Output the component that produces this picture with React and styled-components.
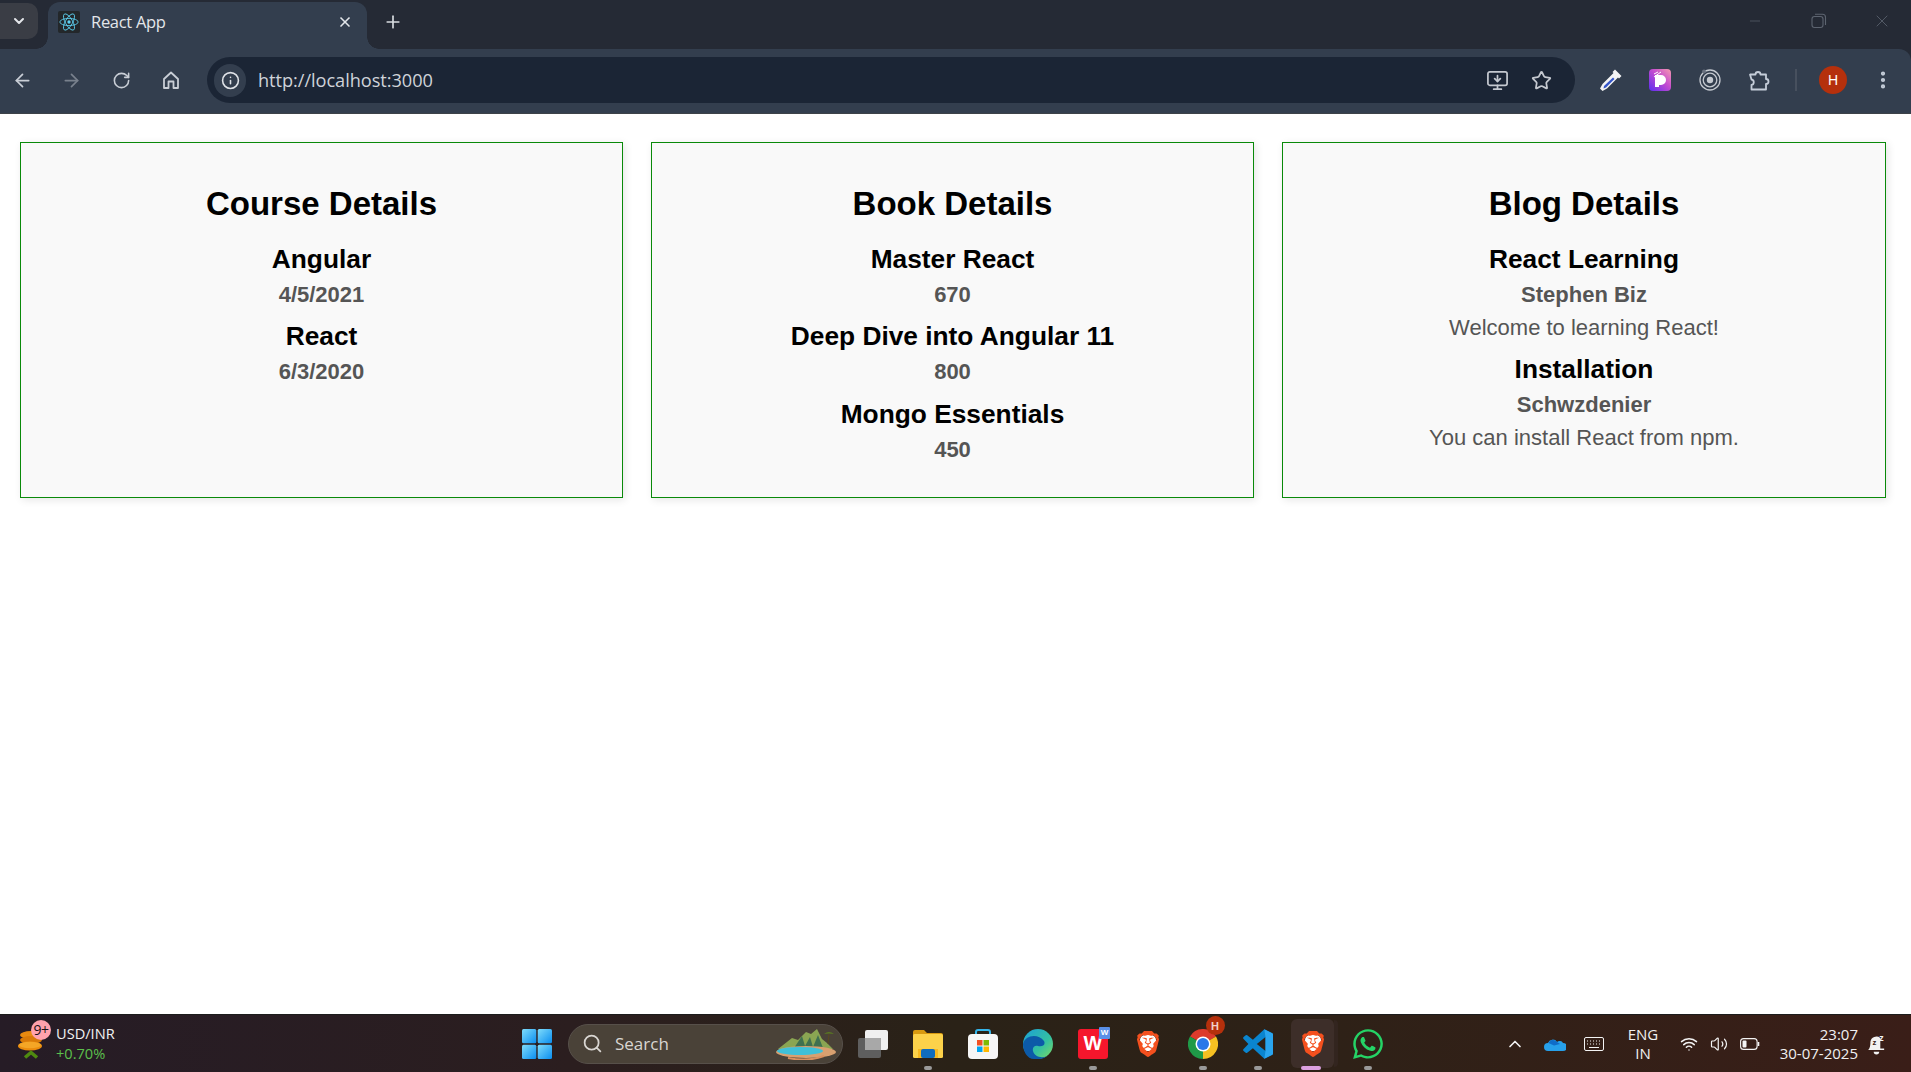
import React from "react";
import styled, { createGlobalStyle } from "styled-components";
import { ArrowLeft, ArrowRight, RotateCw, Info, Star, X, Plus, ChevronDown, ChevronUp, Search as SearchGlyph, EllipsisVertical, Minus, Wifi, Volume2, MonitorDown } from "lucide-react";
import { FaWhatsapp } from "react-icons/fa";
import { SiBrave } from "react-icons/si";

const Global = createGlobalStyle`
  html, body { margin: 0; padding: 0; background: #fff; }
  * { box-sizing: border-box; }
`;
const Page = styled.div`
  height: 1072px; width: 1911px; display: flex; flex-direction: column; overflow: hidden;
  font-family: "Liberation Sans", Arial, sans-serif;
`;
const Header = styled.header`
  flex: none; background: #252a35;
`;
const Strip = styled.div`
  height: 49px; display: flex; align-items: flex-start;
`;
const TabSearch = styled.div`
  width: 38px; height: 36px; margin: 3px 0 0 0; border-radius: 0 10px 10px 0; background: #3a3d45; color: #e4e6ea;
  display: flex; align-items: center; justify-content: center;
`;
const Tab = styled.div`
  position: relative; width: 319px; height: 47px; margin: 2px 0 0 10px; background: #333e4e; border-radius: 12px 12px 0 0;
  display: flex; align-items: center; padding: 0 14px 8px 10px; color: #e3e6ea; font: 16.5px "Open Sans", sans-serif;
  &::before, &::after { content: ""; position: absolute; bottom: 0; width: 12px; height: 12px; }
  &::before { left: -12px; background: radial-gradient(circle at 0 0, transparent 11.5px, #333e4e 12px); }
  &::after { right: -12px; background: radial-gradient(circle at 100% 0, transparent 11.5px, #333e4e 12px); }
`;
const Favicon = styled.div`
  width: 22px; height: 22px; background: #23272a; border-radius: 2px; display: flex; align-items: center; justify-content: center; flex: none; margin-right: 11px;
`;
const TabTitle = styled.span`
  flex: 1; letter-spacing: -0.3px;
`;
const NewTab = styled.div`
  margin: 12px 0 0 16px; color: #d8dbe0; display: flex;
`;
const WindowControls = styled.div`
  margin-left: auto; margin-right: -3px; display: flex; color: #5d6470; padding: 9px 0 0 0;
`;
const WinButton = styled.div`
  width: 63.5px; height: 24px; display: flex; align-items: center; justify-content: center;
`;
const Toolbar = styled.div`
  height: 65px; background: #333e4e; border-bottom: 1px solid #3d4248; border-radius: 0 12px 0 0;
  display: flex; align-items: flex-start; padding: 8px 0 0 0;
`;
const NavGroup = styled.div`
  width: 207px; height: 46px; display: flex; align-items: center; flex: none;
`;
const NavButton = styled.div`
  width: 49.3px; margin-left: ${p => p.$first ? "-2px" : "0"}; display: flex; justify-content: center; color: ${p => p.$dim ? "#79818d" : "#c9ced6"};
`;
const Omnibox = styled.div`
  width: 1368px; height: 46px; border-radius: 23px; background: #1b2535; display: flex; align-items: center; padding: 0 23px 0 7px; flex: none;
`;
const InfoPill = styled.div`
  width: 32px; height: 33px; border-radius: 17px; background: #333e4e; color: #dfe2e7; display: flex; align-items: center; justify-content: center; flex: none;
`;
const Url = styled.span`
  margin-left: 12px; font: 18.2px "Open Sans", sans-serif; color: #cfd3d9; letter-spacing: -0.05px;
  flex: 1;
`;
const OmniIcons = styled.div`
  display: flex; gap: 22px; color: #c5c9d0; align-items: center;
`;
const Extensions = styled.div`
  display: flex; align-items: center; height: 46px; padding-left: 11px; color: #c5cdd9;
`;
const Ext = styled.div`
  width: 49.5px; display: flex; justify-content: center; align-items: center;
`;
const Divider = styled.div`
  width: 2px; height: 22px; background: #47505e; margin: 0 22px 0 11px;
`;
const Avatar = styled.div`
  width: 28px; height: 28px; border-radius: 50%; background: #b5300c; color: #fff; font: 14px "Liberation Sans", sans-serif;
  display: flex; align-items: center; justify-content: center; margin-right: 24.5px;
`;
const Kebab = styled.div`
  display: flex; color: #c5cdd9;
`;
const Content = styled.main`
  flex: 1; background: #fff; padding: 28px 0 0 20px; display: grid; grid-template-columns: 603px 603px 604px; column-gap: 28px; align-content: start;
`;
const Card = styled.section`
  height: 356px; border: 1px solid #0a8a0a; background: #f9f9f9; box-shadow: 2px 2px 8px rgba(0,0,0,.1);
  padding: 42px 20px 0; text-align: center; display: flex; flex-direction: column; align-items: center;
`;
const CardTitle = styled.h2`
  margin: 0 0 23px; font-size: 33px; line-height: 37px; font-weight: 700; color: #000;
`;
const Item = styled.div`
  margin-bottom: 15.4px; display: flex; flex-direction: column; align-items: center;
`;
const ItemName = styled.h3`
  margin: 0; font-size: 26.3px; line-height: 28px; font-weight: 700; color: #000;
`;
const ItemMeta = styled.h4`
  margin: 10px 0 0; font-size: 22px; line-height: 24px; font-weight: 700; color: #555;
`;
const ItemBody = styled.p`
  margin: 9px 0 0; font-size: 22px; line-height: 24px; font-weight: 400; color: #555;
`;
const Taskbar = styled.footer`
  height: 58px; flex: none; display: flex; align-items: center;
  background: linear-gradient(90deg, #261c26 0%, #2b1e1f 30%, #2a2217 50%, #2e2117 70%, #3a1e18 100%);
  border-top: 1px solid #1c1c1c;
`;
const Widget = styled.div`
  width: 509px; flex: none; display: flex; align-items: center; padding-left: 18px;
`;
const CoinWrap = styled.div`
  width: 38px; height: 36px; position: relative; flex: none;
`;
const Badge = styled.div`
  position: absolute; left: 13px; top: -6px; width: 20px; height: 20px; border-radius: 50%; background: #ffa2ad; color: #1b1216;
  font: 14px "Open Sans", sans-serif; display: flex; align-items: center; justify-content: center; letter-spacing: -0.5px;
`;
const WidgetText = styled.div`
  font: 14.6px/20px "Open Sans", sans-serif; color: #f2f2f2; margin-top: -2px;
`;
const Gain = styled.div`
  color: #5cc04c;
`;
const StartSlot = styled.div`
  width: 55px; display: flex; justify-content: center; flex: none;
`;
const SearchPill = styled.div`
  width: 275px; height: 40px; margin: 0 2.5px 0 4px; border-radius: 20px; background: #4a4238; border: 1px solid #57504a;
  display: flex; align-items: center; padding-left: 13px; color: #d9d6d2; font: 17px "Open Sans", sans-serif; position: relative; flex: none;
`;
const SearchText = styled.span`
  margin-left: 12px; flex: 1;
`;
const SearchArt = styled.svg`
  position: absolute; right: 0; top: 3px;
`;
const AppSlot = styled.div`
  width: 55px; height: 49px; flex: none; display: flex; justify-content: center; align-items: center; position: relative;
  & > svg, & > div { position: relative; }
  ${p => p.$active && `
    &::before { content: ""; position: absolute; left: 5px; top: 0; width: 43px; height: 49px; border-radius: 6px; background: #3d2e29; }
    &::after { content: ""; position: absolute; left: 48px; top: 1px; width: 4px; height: 47px; border-radius: 0 6px 6px 0; background: #33251f; }
  `}
`;
const Dot = styled.span`
  position: absolute; bottom: -2px; left: ${p => p.$active ? "47%" : "50%"}; transform: translateX(-50%); height: 4px; border-radius: 2px; z-index: 1;
  width: ${p => p.$active ? "20px" : "8px"}; background: ${p => p.$active ? "#dca0e0" : "#9a9a9a"};
`;
const ChromeBadge = styled.div`
  position: absolute !important; left: 30px; top: -3px; width: 19px; height: 19px; border-radius: 50%; background: #b5300c; color: #f2d0c8;
  font: 700 11px "Liberation Sans", sans-serif; display: flex; align-items: center; justify-content: center;
`;
const Tray = styled.div`
  margin-left: auto; padding-right: 15px; display: flex; align-items: center; color: #f4f4f4;
`;
const TrayIcon = styled.div`
  width: ${p => p.$w}px; display: flex; justify-content: center; align-items: center;
`;
const Lang = styled.div`
  width: 64px; text-align: center; font: 15px/19px "Open Sans", sans-serif; color: #f0f0f0;
`;
const Clock = styled.div`
  text-align: right; font: 15px/19px "Open Sans", sans-serif; color: #f0f0f0; width: 93px; white-space: nowrap;
`;
const WpsTile = styled.div`
  width: 30px; height: 30px; background: #f5162c; border-radius: 3px; position: relative; display: flex; align-items: center; justify-content: center;
`;
const WpsMark = styled.span`
  color: #fff; font: 700 20px "Liberation Sans", sans-serif;
`;
const WpsCorner = styled.span`
  position: absolute; right: -2px; top: -2px; width: 11px; height: 12px; background: #5a90e8; color: #fff; border-radius: 1px;
  font: 700 8px "Liberation Sans", sans-serif; display: flex; align-items: center; justify-content: center;
`;
const BraveWrap = styled.div`
  width: 26px; height: 30px; position: relative; display: flex; align-items: center; justify-content: center; color: #f4501e;
  svg { position: relative; }
  &::before { content: ""; position: absolute; left: 5px; top: 6px; width: 16px; height: 16px; background: #fff; border-radius: 5px; }
`;

const ReactLogo = () => (
  <svg width="20" height="20" viewBox="-12 -12 24 24" fill="none" stroke="#5ed3f3" strokeWidth="1">
    <circle r="2" fill="#5ed3f3" stroke="none" />
    <ellipse rx="11" ry="4.3" />
    <ellipse rx="11" ry="4.3" transform="rotate(60)" />
    <ellipse rx="11" ry="4.3" transform="rotate(120)" />
  </svg>
);
const HomeIcon = () => (
  <svg width="20" height="20" viewBox="0 0 20 20" fill="none" stroke="currentColor" strokeWidth="1.8" strokeLinejoin="round">
    <path d="M3 9 10 2.500 17 9V18H12.500V11.500H7.500V18H3Z" />
  </svg>
);
const Dropper = () => (
  <svg width="24" height="24" viewBox="0 0 24 24">
    <path d="M16 1.500 22.500 8 20 10.500 19 9.500 8 20.500 3.500 23 1 20.500 3.500 16 14.500 5 13.500 4Z" fill="#f4f4f4" />
    <path d="M14 9.500 15.500 11 7 19.500 4.500 20.500 5 18Z" fill="#3556c9" />
  </svg>
);
const PExt = () => (
  <svg width="22" height="22" viewBox="0 0 22 22">
    <defs>
      <linearGradient id="pg" x1="0" y1="1" x2="1" y2="0">
        <stop offset="0" stopColor="#5a2df0" /><stop offset=".55" stopColor="#c44bd0" /><stop offset="1" stopColor="#f79ab0" />
      </linearGradient>
    </defs>
    <rect width="22" height="22" rx="4" fill="url(#pg)" />
    <path d="M6 6h6a5 5 0 0 1 0 10h-2v2H6z" fill="#fff" />
    <path d="M5 5l4-2M5 8l7-5" stroke="#fff" strokeWidth="1" />
  </svg>
);
const TargetExt = () => (
  <svg width="24" height="24" viewBox="0 0 24 24" fill="none">
    <circle cx="12" cy="12" r="10" stroke="#c5c9d0" strokeWidth="1.300" />
    <circle cx="12" cy="12" r="6.800" stroke="#c5c9d0" strokeWidth="1.300" />
    <circle cx="12" cy="12" r="3.200" fill="#c5c9d0" />
    <circle cx="6" cy="3.500" r="2" fill="#6a7280" />
  </svg>
);
const PuzzleExt = () => (
  <svg width="24" height="24" viewBox="0 0 24 24" fill="none" stroke="currentColor" strokeWidth="1.800" strokeLinejoin="round">
    <path d="M3 6.500h5.500a2.500 2.500 0 0 1 5 0H19V11a2.500 2.500 0 0 1 0 5v5.500H4.500V17a2.800 2.800 0 0 0 0-5.500Z" />
  </svg>
);
const Restore = () => (
  <svg width="16" height="16" viewBox="0 0 16 16" fill="none" stroke="currentColor" strokeWidth="1.100">
    <rect x="1" y="3.500" width="11" height="11" rx="2.500" />
    <path d="M4 1.300h7.500a3 3 0 0 1 3 3V12" />
  </svg>
);
const Coins = () => (
  <svg width="26" height="36" viewBox="0 0 26 36">
    <ellipse cx="13" cy="9" rx="11" ry="4" fill="#e88a10" />
    <ellipse cx="13" cy="14" rx="11" ry="4" fill="#d97a08" />
    <ellipse cx="12" cy="20" rx="12" ry="4.500" fill="#ea8c0e" />
    <ellipse cx="12" cy="19" rx="11" ry="3.200" fill="#f4a626" />
    <path d="M7 31.500 13 26.500 19 31.500" fill="none" stroke="#4f8a10" strokeWidth="3.500" />
  </svg>
);
const WindowsLogo = () => (
  <svg width="30" height="30" viewBox="0 0 30 30">
    <defs>
      <linearGradient id="wg" x1="0" y1="0" x2="1" y2="1">
        <stop offset="0" stopColor="#7fdcfb" /><stop offset="1" stopColor="#0a8ef0" />
      </linearGradient>
    </defs>
    <rect width="14.300" height="14.300" rx="1.500" fill="url(#wg)" />
    <rect x="15.700" width="14.300" height="14.300" rx="1.500" fill="url(#wg)" />
    <rect y="15.700" width="14.300" height="14.300" rx="1.500" fill="url(#wg)" />
    <rect x="15.700" y="15.700" width="14.300" height="14.300" rx="1.500" fill="url(#wg)" />
  </svg>
);
const Island = () => (
  <SearchArt width="66" height="32" viewBox="0 0 66 32">
    <path d="M2 21 16 10l6 2 8-8 5 2 6-5 5 10 5 4 6 6Z" fill="#8aa552" />
    <path d="M18 20 26 8l3 10 5-9 3 10 5-12 5 13Z" fill="#3f7050" />
    <path d="M52 16 53 6" stroke="#5a4a20" strokeWidth="1" />
    <path d="M48 6q5-4 10 0-5-1-10 0Z" fill="#5a7a20" />
    <ellipse cx="30" cy="24" rx="30" ry="6" fill="#d8a070" />
    <ellipse cx="24" cy="23" rx="23" ry="4" fill="#3fc0d8" />
    <path d="M12 30q20 4 36-2" stroke="#d89060" strokeWidth="2" fill="none" />
  </SearchArt>
);
const TaskView = () => (
  <svg width="30" height="28" viewBox="0 0 30 28">
    <rect x="0" y="8" width="23" height="20" rx="2" fill="#5e5e5e" />
    <rect x="7" y="0" width="23" height="20" rx="2" fill="#f0f0f0" />
    <rect x="7" y="8" width="16" height="12" fill="#a8a8a8" />
  </svg>
);
const Explorer = () => (
  <svg width="30" height="28" viewBox="0 0 30 28">
    <path d="M0 2a2 2 0 0 1 2-2h9l3 3h14a2 2 0 0 1 2 2v8H0Z" fill="#d89a10" />
    <rect y="4" width="30" height="24" rx="1.500" fill="#fcd24a" />
    <rect x="5" y="19" width="20" height="9" fill="#f7b81f" />
    <rect x="8" y="19" width="14" height="9" rx="2" fill="#0f6cbd" />
  </svg>
);
const Store = () => (
  <svg width="30" height="30" viewBox="0 0 30 30">
    <path d="M8 6V3a2 2 0 0 1 2-2h10a2 2 0 0 1 2 2v3" fill="none" stroke="#35b5ea" strokeWidth="2" />
    <rect y="5" width="30" height="25" rx="4" fill="#f6f6f6" />
    <rect x="9" y="11" width="5.500" height="5.500" fill="#f25022" />
    <rect x="15.500" y="11" width="5.500" height="5.500" fill="#7fba00" />
    <rect x="9" y="17.500" width="5.500" height="5.500" fill="#00a4ef" />
    <rect x="15.500" y="17.500" width="5.500" height="5.500" fill="#ffb900" />
  </svg>
);
const Edge = () => (
  <svg width="30" height="30" viewBox="0 0 30 30">
    <defs>
      <linearGradient id="eg" x1="0" y1="0" x2="1" y2="1">
        <stop offset="0" stopColor="#1a9fd8" /><stop offset=".6" stopColor="#35c1a0" /><stop offset="1" stopColor="#7fdb60" />
      </linearGradient>
    </defs>
    <circle cx="15" cy="15" r="15" fill="url(#eg)" />
    <path d="M0 15C2 6 15 4 21 12c2 4-2 6-6 5-3-1-6 1-5 5 1 5 8 8 14 5-5 4-10 3-13 3C4 30 0 22 0 15Z" fill="#0c5aa8" />
  </svg>
);
const Wps = () => (
  <WpsTile>
    <WpsMark>W</WpsMark>
    <WpsCorner>W</WpsCorner>
  </WpsTile>
);
const Brave = () => <BraveWrap><SiBrave size={28} /></BraveWrap>;
const Chrome = () => (
  <svg width="30" height="30" viewBox="0 0 30 30">
    <path d="M15 15 2 7.500A15 15 0 0 1 28 7.500Z" fill="#dd3a2c" />
    <path d="M15 15 28 7.500A15 15 0 0 1 15 30Z" fill="#f6c022" />
    <path d="M15 15 15 30A15 15 0 0 1 2 7.500Z" fill="#1f9a48" />
    <circle cx="15" cy="15" r="7.500" fill="#fff" />
    <circle cx="15" cy="15" r="6" fill="#2a78e8" />
  </svg>
);
const VsCode = () => (
  <svg width="30" height="30" viewBox="0 0 100 100">
    <path fillRule="evenodd" d="M71 99 96 87a6 6 0 0 0 4-6V19a6 6 0 0 0-4-6L71 1 33 36 14 21a4 4 0 0 0-5 0L2 27a4 4 0 0 0 0 6L18 50 2 67a4 4 0 0 0 0 6l7 6a4 4 0 0 0 5 0L33 64ZM75 27 46 50 75 73Z" fill="#0a85cf" />
    <path d="M71 1 96 13a6 6 0 0 1 4 6V81a6 6 0 0 1-4 6L71 99 75 73V27Z" fill="#2aa5ee" />
  </svg>
);
const OneDrive = () => (
  <svg width="22" height="14" viewBox="0 0 22 14">
    <path d="M4 14a4 4 0 0 1 0-8 5 5 0 0 1 9-1 4 4 0 0 1 6 1 4 4 0 0 1 0 8Z" fill="#27a0ea" />
    <path d="M4.500 6a5 5 0 0 1 8.500-1l3 2-6 1.500Z" fill="#0f6cc8" />
  </svg>
);
const Keyboard = () => (
  <svg width="20" height="14" viewBox="0 0 20 14" fill="none" stroke="currentColor" strokeWidth="1">
    <rect x=".5" y=".5" width="19" height="13" rx="1.500" />
    <path d="M3 4h1M6 4h1M9 4h1M12 4h1M15 4h1M3 7h1M6 7h1M9 7h1M12 7h1M15 7h1M5 10.500h10" />
  </svg>
);
const Battery = () => (
  <svg width="20" height="12" viewBox="0 0 20 12" fill="none" stroke="currentColor" strokeWidth="1.100">
    <rect x=".6" y=".6" width="16.500" height="10.800" rx="3" />
    <rect x="2.500" y="2.500" width="4" height="7" rx="1" fill="currentColor" stroke="none" />
    <path d="M18.500 4v4" strokeWidth="1.600" />
  </svg>
);
const BellZ = () => (
  <svg width="20" height="22" viewBox="0 0 18 20">
    <path d="M2 14c1-2 1-4 1-6a5.500 5.500 0 0 1 9-3.500v9.500h3.500v1.500H1Z" fill="#f2f2f2" />
    <path d="M6 17h5a2.500 2.500 0 0 1-5 0Z" fill="#f2f2f2" />
    <text x="5" y="11" fontSize="7" fontWeight="700" fill="#3a1e18" fontFamily="Liberation Sans">z</text>
    <text x="11" y="7" fontSize="8" fontWeight="700" fill="#f2f2f2" fontFamily="Liberation Sans">z</text>
  </svg>
);
const WhatsApp = () => <FaWhatsapp size={34} color="#25d366" />;

const cards = [
  { title: "Course Details", items: [{ name: "Angular", meta: "4/5/2021" }, { name: "React", meta: "6/3/2020" }] },
  { title: "Book Details", items: [{ name: "Master React", meta: "670" }, { name: "Deep Dive into Angular 11", meta: "800" }, { name: "Mongo Essentials", meta: "450" }] },
  { title: "Blog Details", items: [
    { name: "React Learning", meta: "Stephen Biz", body: "Welcome to learning React!" },
    { name: "Installation", meta: "Schwzdenier", body: "You can install React from npm." },
  ] },
];
const apps = [
  { C: TaskView }, { C: Explorer, dot: true }, { C: Store }, { C: Edge }, { C: Wps, dot: true }, { C: Brave },
  { C: Chrome, dot: true, badge: true }, { C: VsCode, dot: true }, { C: Brave, dot: true, active: true },
  { C: WhatsApp, dot: true },
];

export default function App() {
  return (
    <Page>
      <Global />
      <Header>
        <Strip>
          <TabSearch><ChevronDown size={16} strokeWidth={3} /></TabSearch>
          <Tab>
            <Favicon><ReactLogo /></Favicon>
            <TabTitle>React App</TabTitle>
            <X size={16} strokeWidth={2.5} />
          </Tab>
          <NewTab><Plus size={20} strokeWidth={2} /></NewTab>
          <WindowControls>
            <WinButton><Minus size={16} strokeWidth={1} /></WinButton>
            <WinButton><Restore /></WinButton>
            <WinButton><X size={20} strokeWidth={1} /></WinButton>
          </WindowControls>
        </Strip>
        <Toolbar>
          <NavGroup>
            <NavButton $first><ArrowLeft size={21} strokeWidth={2} /></NavButton>
            <NavButton $dim><ArrowRight size={21} strokeWidth={2} /></NavButton>
            <NavButton><RotateCw size={19} strokeWidth={2} /></NavButton>
            <NavButton><HomeIcon /></NavButton>
          </NavGroup>
          <Omnibox>
            <InfoPill><Info size={19} strokeWidth={2} /></InfoPill>
            <Url>http://localhost:3000</Url>
            <OmniIcons>
              <MonitorDown size={23} strokeWidth={1.8} />
              <Star size={21} strokeWidth={2} />
            </OmniIcons>
          </Omnibox>
          <Extensions>
            <Ext><Dropper /></Ext>
            <Ext><PExt /></Ext>
            <Ext><TargetExt /></Ext>
            <Ext><PuzzleExt /></Ext>
            <Divider />
            <Avatar>H</Avatar>
            <Kebab><EllipsisVertical size={22} strokeWidth={2.6} /></Kebab>
          </Extensions>
        </Toolbar>
      </Header>
      <Content>
        {cards.map(card => (
          <Card key={card.title}>
            <CardTitle>{card.title}</CardTitle>
            {card.items.map(item => (
              <Item key={item.name}>
                <ItemName>{item.name}</ItemName>
                <ItemMeta>{item.meta}</ItemMeta>
                {item.body && <ItemBody>{item.body}</ItemBody>}
              </Item>
            ))}
          </Card>
        ))}
      </Content>
      <Taskbar>
        <Widget>
          <CoinWrap>
            <Coins />
            <Badge>9+</Badge>
          </CoinWrap>
          <WidgetText>
            USD/INR
            <Gain>+0.70%</Gain>
          </WidgetText>
        </Widget>
        <StartSlot><WindowsLogo /></StartSlot>
        <SearchPill>
          <SearchGlyph size={21} strokeWidth={2} />
          <SearchText>Search</SearchText>
          <Island />
        </SearchPill>
        {apps.map(({ C, dot, active, badge }, i) => (
          <AppSlot key={i} $active={active}>
            <C />
            {badge && <ChromeBadge>H</ChromeBadge>}
            {dot && <Dot $active={active} />}
          </AppSlot>
        ))}
        <Tray>
          <TrayIcon $w={36}><ChevronUp size={20} strokeWidth={2} /></TrayIcon>
          <TrayIcon $w={44}><OneDrive /></TrayIcon>
          <TrayIcon $w={34}><Keyboard /></TrayIcon>
          <Lang>ENG<br />IN</Lang>
          <TrayIcon $w={28}><Wifi size={18} strokeWidth={2} /></TrayIcon>
          <TrayIcon $w={32}><Volume2 size={18} strokeWidth={1.6} /></TrayIcon>
          <TrayIcon $w={30}><Battery /></TrayIcon>
          <Clock>23:07<br />30-07-2025</Clock>
          <TrayIcon $w={38}><BellZ /></TrayIcon>
        </Tray>
      </Taskbar>
    </Page>
  );
}
